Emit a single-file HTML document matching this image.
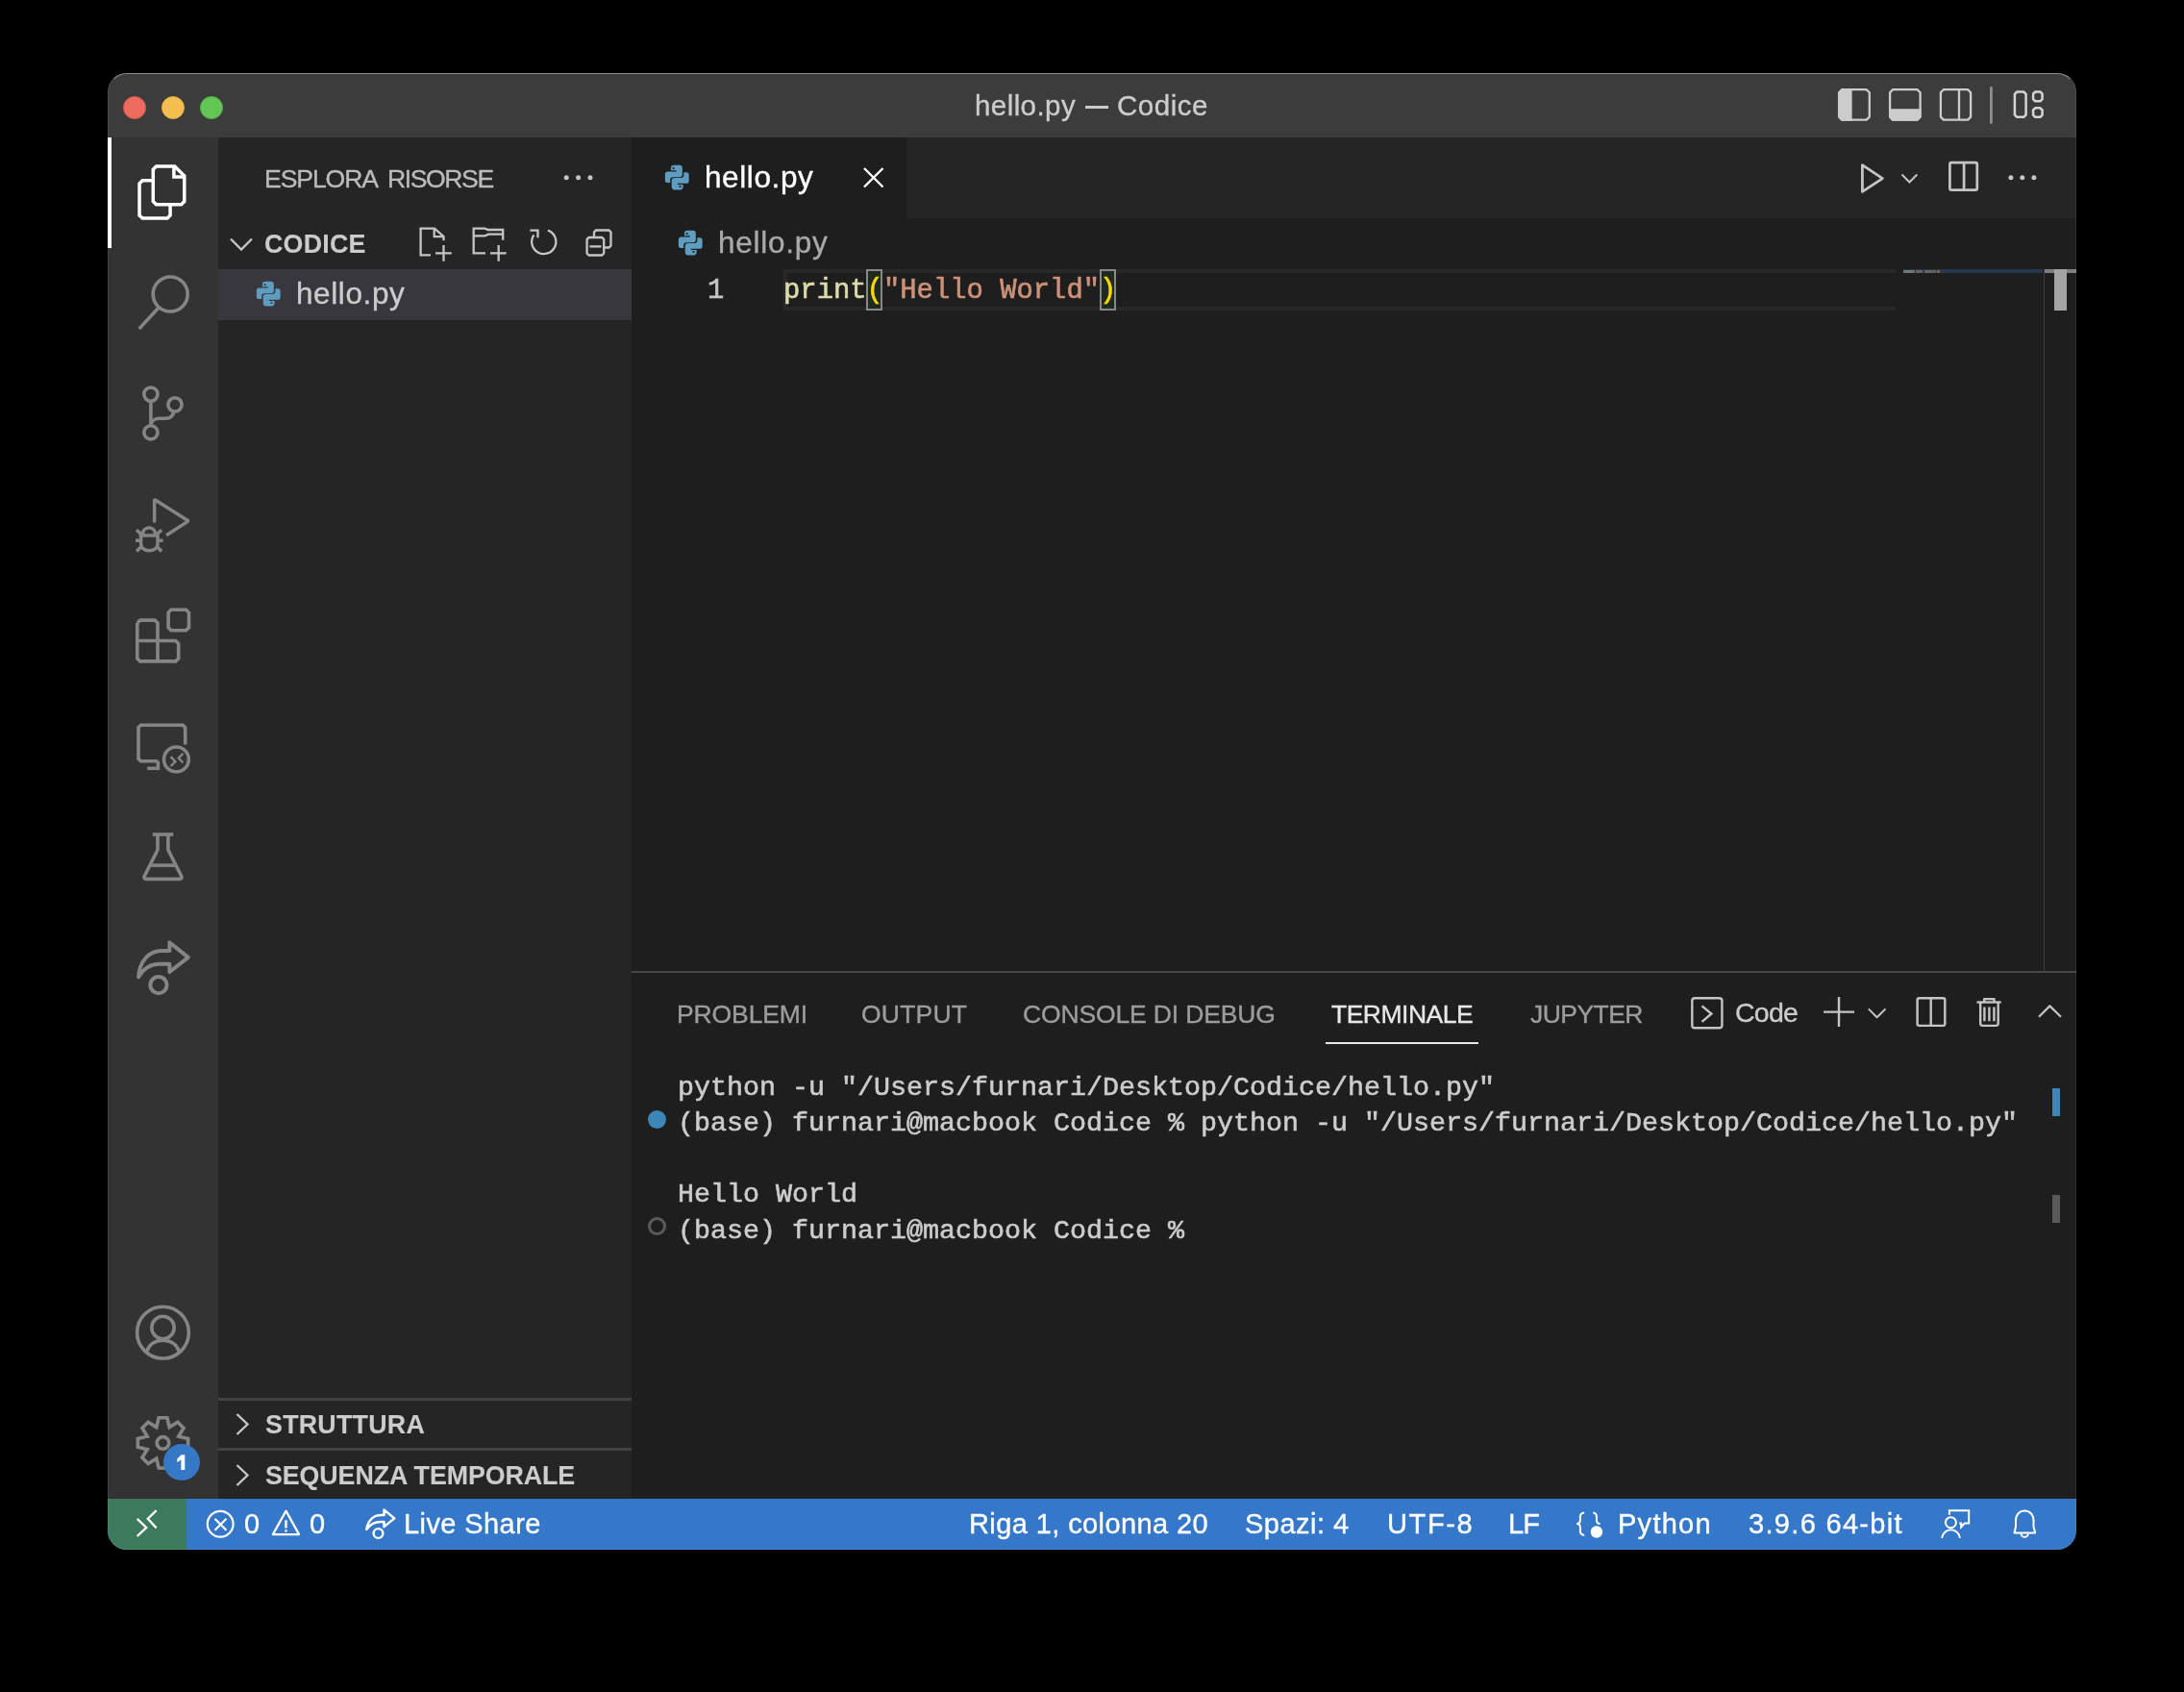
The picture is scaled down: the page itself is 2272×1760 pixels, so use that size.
<!DOCTYPE html>
<html><head><meta charset="utf-8">
<style>
html,body{margin:0;padding:0;background:#000;width:2272px;height:1760px;overflow:hidden;-webkit-font-smoothing:antialiased;}
*{box-sizing:border-box;}
.a{position:absolute;}
.t{position:absolute;white-space:nowrap;will-change:transform;-webkit-text-stroke:0.35px currentColor;font-family:"Liberation Sans",sans-serif;line-height:1;}
.b{-webkit-text-stroke:0.1px currentColor;}
.m{position:absolute;white-space:pre;will-change:transform;font-family:"Liberation Mono",monospace;line-height:1;}
#win{position:absolute;left:112px;top:76px;width:2048px;height:1536px;border-radius:20px;overflow:hidden;background:#1e1e1e;}
#pg{position:absolute;left:-112px;top:-76px;width:2272px;height:1760px;}
.ed{font-size:28.87px;-webkit-text-stroke:0.6px currentColor;}
.tm{font-size:28.33px;color:#cccccc;-webkit-text-stroke:0.6px currentColor;}
</style></head>
<body>
<div id="win"><div id="pg">
  <!-- title bar -->
  <div class="a" style="left:112px;top:76px;width:2048px;height:67px;background:#3c3c3c;"></div>
  <div class="a" style="left:1129px;top:110px;width:24px;height:3px;background:#cccccc;"></div>
  <!-- activity bar -->
  <div class="a" style="left:112px;top:143px;width:115px;height:1416px;background:#333333;"></div>
  <div class="a" style="left:112px;top:143px;width:4px;height:115px;background:#ffffff;"></div>
  <!-- sidebar -->
  <div class="a" style="left:227px;top:143px;width:430px;height:1416px;background:#252526;"></div>
  <div class="a" style="left:227px;top:280px;width:430px;height:53px;background:#37373d;"></div>
  <div class="a" style="left:227px;top:1454px;width:430px;height:3px;background:#424242;"></div>
  <div class="a" style="left:227px;top:1506px;width:430px;height:3px;background:#424242;"></div>
  <!-- tabs bar -->
  <div class="a" style="left:657px;top:143px;width:1503px;height:84px;background:#252526;"></div>
  <div class="a" style="left:657px;top:143px;width:286px;height:84px;background:#1e1e1e;"></div>
  <!-- editor -->
  <div class="a" style="left:657px;top:227px;width:1503px;height:783px;background:#1e1e1e;"></div>
  <!-- current line highlight -->
  <div class="a" style="left:815px;top:280px;width:1157px;height:43px;border:4px solid #282828;border-right:none;"></div>
  <!-- minimap line -->
  <div class="a" style="left:1980px;top:280px;width:145px;height:4px;background:#26384e;"></div>
  <div class="a" style="left:1980px;top:281px;width:10px;height:3px;background:#7f8a80;opacity:.8"></div>
  <div class="a" style="left:1990px;top:281px;width:2px;height:3px;background:#8a7a3a;opacity:.8"></div>
  <div class="a" style="left:1993px;top:281px;width:7px;height:3px;background:#7a6a66;opacity:.8"></div>
  <div class="a" style="left:2002px;top:281px;width:12px;height:3px;background:#7a6a66;opacity:.8"></div>
  <div class="a" style="left:2015px;top:281px;width:3px;height:3px;background:#8a7a3a;opacity:.8"></div>
  <!-- vertical scrollbar border + slider -->
  <div class="a" style="left:2126px;top:280px;width:1px;height:730px;background:#3c3c3c;"></div>
  <div class="a" style="left:2127px;top:280px;width:33px;height:4px;background:#7f7f7f;"></div>
  <div class="a" style="left:2137px;top:280px;width:13px;height:43px;background:#a4a4a4;"></div>
  <!-- bracket match boxes -->
  <div class="a" style="left:901px;top:280px;width:17px;height:43px;border:2px solid #888888;background:#1f2a1f;"></div>
  <div class="a" style="left:1144px;top:280px;width:17px;height:43px;border:2px solid #888888;background:#1f2a1f;"></div>
  <!-- code -->
  <div class="m ed" style="left:736px;top:289.08px;color:#c6c6c6;">1</div>
  <div class="m ed" style="left:815px;top:289.08px;"><span style="color:#dcdcaa">print</span><span style="color:#ffd700">(</span><span style="color:#ce9178">"Hello World"</span><span style="color:#ffd700">)</span></div>
  <!-- panel -->
  <div class="a" style="left:657px;top:1010px;width:1503px;height:549px;background:#1e1e1e;border-top:2px solid #474747;"></div>
  <div class="a" style="left:1379px;top:1083.5px;width:159px;height:2.5px;background:#e7e7e7;"></div>
  <!-- terminal -->
  <div class="m tm" style="left:705px;top:1117.8px;">python -u "/Users/furnari/Desktop/Codice/hello.py"</div>
  <div class="m tm" style="left:705px;top:1155.0px;">(base) furnari@macbook Codice % python -u "/Users/furnari/Desktop/Codice/hello.py"</div>
  <div class="m tm" style="left:705px;top:1229.4px;">Hello World</div>
  <div class="m tm" style="left:705px;top:1266.6px;">(base) furnari@macbook Codice % </div>
  <div class="a" style="left:674px;top:1155px;width:19px;height:19px;border-radius:50%;background:#3d87b8;"></div>
  <div class="a" style="left:674px;top:1266px;width:19px;height:19px;border-radius:50%;border:3px solid #5a5a5a;"></div>
  <div class="a" style="left:2135px;top:1132px;width:8px;height:29px;background:#3d87b8;"></div>
  <div class="a" style="left:2135px;top:1243px;width:8px;height:29px;background:#5a5a5a;"></div>
  <!-- status bar -->
  <div class="a" style="left:112px;top:1559px;width:2048px;height:53px;background:#3577c9;"></div>
  <div class="a" style="left:112px;top:1559px;width:82px;height:53px;background:#3b7b5b;"></div>
<div class="t" style="left:1013.90px;top:94.82px;font-size:29.5px;font-weight:400;color:#cccccc;letter-spacing:0.424px">hello.py</div>
<div class="t" style="left:1161.60px;top:94.82px;font-size:29.5px;font-weight:400;color:#cccccc;letter-spacing:0.516px">Codice</div>
<div class="t" style="left:274.90px;top:173.18px;font-size:26.6px;font-weight:400;color:#bbbbbb;letter-spacing:-1.099px">ESPLORA</div>
<div class="t" style="left:402.80px;top:173.18px;font-size:26.6px;font-weight:400;color:#bbbbbb;letter-spacing:-1.427px">RISORSE</div>
<div class="t b" style="left:275.00px;top:240.61px;font-size:26.8px;font-weight:700;color:#cccccc;letter-spacing:0.251px">CODICE</div>
<div class="t" style="left:308.00px;top:290.33px;font-size:31.5px;font-weight:400;color:#cccccc;letter-spacing:0.597px">hello.py</div>
<div class="t" style="left:733.00px;top:169.33px;font-size:31.5px;font-weight:400;color:#ffffff;letter-spacing:0.597px">hello.py</div>
<div class="t" style="left:747.00px;top:236.93px;font-size:31.5px;font-weight:400;color:#a9a9a9;letter-spacing:0.740px">hello.py</div>
<div class="t b" style="left:276.40px;top:1468.61px;font-size:26.8px;font-weight:700;color:#cccccc;letter-spacing:0.252px">STRUTTURA</div>
<div class="t b" style="left:276.40px;top:1521.61px;font-size:26.8px;font-weight:700;color:#cccccc;letter-spacing:-0.082px">SEQUENZA TEMPORALE</div>
<div class="t" style="left:703.80px;top:1041.86px;font-size:26.5px;font-weight:400;color:#9d9d9d;letter-spacing:-0.113px">PROBLEMI</div>
<div class="t" style="left:896.00px;top:1041.86px;font-size:26.5px;font-weight:400;color:#9d9d9d;letter-spacing:0.210px">OUTPUT</div>
<div class="t" style="left:1063.80px;top:1041.86px;font-size:26.5px;font-weight:400;color:#9d9d9d;letter-spacing:-0.149px">CONSOLE DI DEBUG</div>
<div class="t" style="left:1385.00px;top:1041.86px;font-size:26.5px;font-weight:400;color:#e7e7e7;letter-spacing:-0.499px">TERMINALE</div>
<div class="t" style="left:1591.60px;top:1041.86px;font-size:26.5px;font-weight:400;color:#9d9d9d;letter-spacing:-0.550px">JUPYTER</div>
<div class="t" style="left:1805.00px;top:1038.87px;font-size:28.5px;font-weight:400;color:#cccccc;letter-spacing:-0.761px">Code</div>
<div class="t" style="left:254.00px;top:1570.95px;font-size:29px;font-weight:400;color:#ffffff;letter-spacing:0.000px">0</div>
<div class="t" style="left:322.00px;top:1570.95px;font-size:29px;font-weight:400;color:#ffffff;letter-spacing:0.000px">0</div>
<div class="t" style="left:419.80px;top:1570.95px;font-size:29px;font-weight:400;color:#ffffff;letter-spacing:0.410px">Live Share</div>
<div class="t" style="left:1008.00px;top:1570.95px;font-size:29px;font-weight:400;color:#ffffff;letter-spacing:0.399px">Riga 1, colonna 20</div>
<div class="t" style="left:1295.00px;top:1570.95px;font-size:29px;font-weight:400;color:#ffffff;letter-spacing:0.478px">Spazi: 4</div>
<div class="t" style="left:1442.50px;top:1570.95px;font-size:29px;font-weight:400;color:#ffffff;letter-spacing:1.618px">UTF-8</div>
<div class="t" style="left:1568.50px;top:1570.95px;font-size:29px;font-weight:400;color:#ffffff;letter-spacing:-0.928px">LF</div>
<div class="t" style="left:1683.00px;top:1570.95px;font-size:29px;font-weight:400;color:#ffffff;letter-spacing:1.269px">Python</div>
<div class="t" style="left:1818.50px;top:1570.95px;font-size:29px;font-weight:400;color:#ffffff;letter-spacing:1.314px">3.9.6 64-bit</div>
<svg class="a" style="left:0;top:0" width="2272" height="1760" viewBox="0 0 2272 1760">

<!-- traffic lights -->
<circle cx="140" cy="112" r="11.6" fill="#ed6a5e" stroke="#d9574c" stroke-width="0.8"/>
<circle cx="180" cy="112" r="11.6" fill="#f5bf4f" stroke="#dfa73b" stroke-width="0.8"/>
<circle cx="220" cy="112" r="11.6" fill="#62c655" stroke="#4fad43" stroke-width="0.8"/>

<!-- title layout icons -->
<g fill="none" stroke="#cccccc" stroke-width="2.3" stroke-linejoin="round">
  <path d="M1916 93.2H1941.7L1944.8 96.3V121.6L1941.7 124.6H1916L1913.1 121.6V96.3Z"/>
  <path d="M1969 93.2H1994.6L1997.6 96.3V121.6L1994.6 124.6H1969L1966.1 121.6V96.3Z"/>
  <path d="M2021.8 93.2H2047.2L2050.1 96.3V121.6L2047.2 124.6H2021.8L2018.9 121.6V96.3Z"/>
  <path d="M2038 93.2V124.6"/>
</g>
<path d="M1913 96V121.6L1916 125.7H1926.6V92H1916L1913 96Z" fill="#cccccc"/>
<path d="M1965 113.2H1998.6V121.6L1995 125.7H1968.5L1965 121.6Z" fill="#cccccc"/>
<path d="M2071.4 91.5V127.5" stroke="#8e8e8e" stroke-width="2.8" stroke-linecap="round"/>
<g fill="none" stroke="#d4d4d4" stroke-width="2.5" stroke-linejoin="round">
  <path d="M2098.3 95.5H2105.2L2107.6 97.9V119.4L2105.2 121.8H2098.3L2095.9 119.4V97.9Z"/>
  <path d="M2117.3 95.5H2122.4L2124.6 97.7V103.1L2122.4 105.3H2117.3L2115.1 103.1V97.7Z"/>
  <path d="M2117.3 112.3H2122.4L2124.6 114.5V119.6L2122.4 121.8H2117.3L2115.1 119.6V114.5Z"/>
</g>

<!-- activity bar -->
<!-- files (active) -->
<g fill="none" stroke="#ffffff" stroke-width="3.5" stroke-linejoin="miter">
  <path d="M159.3 176.3L162.5 173.1H181.75L191.8 183V209.6L188.6 212.8H162.5L159.3 209.6Z"/>
  <path d="M180.9 173.1V184H191.8"/>
  <path d="M159.3 187.75H148.2L145.05 190.9V224L148.2 227.1H174L177.1 224V212.8"/>
</g>
<!-- search -->
<g fill="none" stroke="#858585" stroke-width="3.6">
  <circle cx="177.2" cy="306" r="18"/>
  <path d="M165 320L144.7 342.1"/>
</g>
<!-- source control -->
<g fill="none" stroke="#858585" stroke-width="3.6">
  <circle cx="156.9" cy="410.1" r="7.1"/>
  <circle cx="156.9" cy="449.8" r="7.1"/>
  <circle cx="182" cy="420.9" r="7.1"/>
  <path d="M156.9 417.2V442.7"/>
  <path d="M181 428C180 433.5 176.5 435.3 172 435.3H166C161 435.3 157.5 438 156.9 442"/>
</g>
<!-- run & debug -->
<g fill="none" stroke="#858585" stroke-width="3.5">
  <path d="M160.65 543.5V519.5L196.2 541.9L173.1 556.75" stroke-linejoin="bevel"/>
  <path d="M148.6 557.5V554.7A6.5 6.5 0 0 1 161.5 554.7V557.5"/>
  <path d="M144.7 557H165.4"/>
  <path d="M146.6 557V565.5C146.6 570 150.5 572.7 155.2 572.7C160 572.7 164 570 164 565.5V557"/>
  <path d="M142 551.2L146.8 555.6M168.1 551.2L163.4 555.6M141 562.3H145M165.4 562.3H169.5M142 573.5L147.2 568.6M168.1 573.5L163.1 568.6"/>
</g>
<!-- extensions -->
<g fill="none" stroke="#858585" stroke-width="3.6" stroke-linejoin="miter">
  <path d="M142.8 648V685L145.8 687.9H182.7L185.7 685V669.5L182.7 666.5H142.8"/>
  <path d="M142.8 648L145.8 645.1H161L164 648V687.9"/>
  <path d="M178 634.2H193.5L196.5 637.2V652.7L193.5 655.7H178L175.1 652.7V637.2Z"/>
</g>
<!-- remote explorer -->
<g fill="none" stroke="#858585" stroke-width="3.6" stroke-linejoin="miter">
  <path d="M164.4 791.75H146.5L144 789.3V756.8L146.5 754.3H190.2L192.7 756.8V774.5"/>
  <path d="M164.4 791.75V799.2H153.2"/>
  <circle cx="183.4" cy="789.9" r="12.9"/>
</g>
<g fill="none" stroke="#858585" stroke-width="2.4">
  <path d="M177.6 787.2L182.4 792.2L177.6 797"/>
  <path d="M190.4 783.8L185.8 788.5L190.4 793.3"/>
</g>
<!-- testing -->
<g fill="none" stroke="#858585" stroke-width="3.6" stroke-linejoin="round">
  <path d="M158.8 868H180.3"/>
  <path d="M164 868V884L150.2 911.5Q149 914.4 152.5 914.4H186.5Q190 914.4 188.8 911.5L174.9 884V868"/>
  <path d="M157.1 900.1H183"/>
</g>
<!-- live share -->
<g fill="none" stroke="#858585" stroke-width="4.0" stroke-linejoin="round">
  <path d="M176.4 989V980.3L195.8 995.9L176.4 1011V1002.7H165.6C156 1002.7 149 1008 144.1 1016.3C145 1000 155 989 168.1 989Z"/>
  <circle cx="165" cy="1024.6" r="8.6"/>
</g>
<!-- account -->
<g fill="none" stroke="#858585" stroke-width="3.6">
  <circle cx="169.5" cy="1386.1" r="26.9"/>
  <circle cx="169.5" cy="1381" r="11.7"/>
  <path d="M152.3 1406.5C155 1398.5 161 1394.2 169.5 1394.2C178 1394.2 184 1398.5 186.7 1406.5"/>
</g>
<!-- gear -->
<path id="gear" fill="none" stroke="#858585" stroke-width="3.6" stroke-linejoin="miter" d="M162.76 1484.64 L165.13 1474.76 L173.87 1474.76 L176.24 1484.64 L184.89 1479.33 L191.07 1485.51 L185.76 1494.16 L195.64 1496.53 L195.64 1505.27 L185.76 1507.64 L191.07 1516.29 L184.89 1522.47 L176.24 1517.16 L173.87 1527.04 L165.13 1527.04 L162.76 1517.16 L154.11 1522.47 L147.93 1516.29 L153.24 1507.64 L143.36 1505.27 L143.36 1496.53 L153.24 1494.16 L147.93 1485.51 L154.11 1479.33Z"/>
<circle cx="169.5" cy="1500.9" r="6.3" fill="none" stroke="#858585" stroke-width="3.6"/>
<!-- badge -->
<circle cx="189" cy="1521" r="19" fill="#3478c6"/>
<path d="M188.6 1513.2H192.3V1529.1H188.4V1518.3L184.3 1521.3V1517.6Z" fill="#ffffff"/>

<!-- sidebar -->
<g fill="#c5c5c5">
  <circle cx="589.2" cy="184.7" r="2.5"/>
  <circle cx="601.6" cy="184.7" r="2.5"/>
  <circle cx="614" cy="184.7" r="2.5"/>
</g>
<g fill="none" stroke="#c5c5c5" stroke-width="2.4">
  <path d="M240 248.5L251 259.5L262 248.5"/>
  <path d="M246.5 1471L257.5 1481.5L246.5 1492"/>
  <path d="M246.5 1524L257.5 1534.5L246.5 1545"/>
</g>
<g fill="none" stroke="#c5c5c5" stroke-width="2.3" stroke-linejoin="miter">
  <!-- new file -->
  <path d="M448 265.3H437.6V237.6H452L461.5 245.9V250.2"/>
  <path d="M451.7 237.6V246.2H461.5"/>
  <path d="M453 263.3H469.8M461.5 255V271.8"/>
  <!-- new folder -->
  <path d="M505 263.3H492.7V237.6H504.5L507.5 239.0H523.2V249.7"/>
  <path d="M492.7 245.3H504.5L508 243.7H523.2"/>
  <path d="M510 263.3H526.7M518.7 255V271.8"/>
  <!-- refresh -->
  <path d="M570 239.6A12.6 12.6 0 1 1 555.4 244.3"/>
  <path d="M551.4 239.6H559.5V247.2"/>
  <!-- collapse -->
  <path d="M612.6 247H626.2L628.2 249V263.5L626.2 265.5H612.6L610.6 263.5V249Z"/>
  <path d="M618 247V241.5L620 239.5H633.5L635.5 241.5V255.5L633.5 257.5H628.2"/>
  <path d="M613.4 256.4H625.5"/>
</g>
<!-- python icons -->
<g fill="#5f9dc0">
  <g transform="translate(685 165) scale(0.02364)">
    <path d="M680 290H920Q1050 290 1050 420V690Q1050 815 925 815H640Q515 815 515 940V1060H410Q290 1060 290 940V690Q290 570 410 570H790V520H545V420Q545 290 680 290Z"/>
    <path transform="rotate(180 815 830)" d="M680 290H920Q1050 290 1050 420V690Q1050 815 925 815H640Q515 815 515 940V1060H410Q290 1060 290 940V690Q290 570 410 570H790V520H545V420Q545 290 680 290Z"/>
  </g>
  <g transform="translate(260 286) scale(0.02364)">
    <path d="M680 290H920Q1050 290 1050 420V690Q1050 815 925 815H640Q515 815 515 940V1060H410Q290 1060 290 940V690Q290 570 410 570H790V520H545V420Q545 290 680 290Z"/>
    <path transform="rotate(180 815 830)" d="M680 290H920Q1050 290 1050 420V690Q1050 815 925 815H640Q515 815 515 940V1060H410Q290 1060 290 940V690Q290 570 410 570H790V520H545V420Q545 290 680 290Z"/>
  </g>
  <g transform="translate(699 233) scale(0.02364)">
    <path d="M680 290H920Q1050 290 1050 420V690Q1050 815 925 815H640Q515 815 515 940V1060H410Q290 1060 290 940V690Q290 570 410 570H790V520H545V420Q545 290 680 290Z"/>
    <path transform="rotate(180 815 830)" d="M680 290H920Q1050 290 1050 420V690Q1050 815 925 815H640Q515 815 515 940V1060H410Q290 1060 290 940V690Q290 570 410 570H790V520H545V420Q545 290 680 290Z"/>
  </g>
</g>
<g fill="#1e1e1e">
  <circle cx="700.6" cy="175" r="1.1"/><circle cx="707.5" cy="194" r="1.1"/>
  <circle cx="714.6" cy="243" r="1.1"/><circle cx="721.5" cy="262" r="1.1"/>
</g>
<g fill="#37373d">
  <circle cx="275.6" cy="296" r="1.1"/><circle cx="282.5" cy="315" r="1.1"/>
</g>
<!-- tab close -->
<path d="M899 175L918.5 194.5M918.5 175L899 194.5" stroke="#ffffff" stroke-width="2.4" fill="none"/>
<!-- editor actions -->
<g fill="none" stroke="#c5c5c5" stroke-width="2.8" stroke-linejoin="round">
  <path d="M1937.4 171.7V199.4L1958.4 185.6Z"/>
  <path d="M2030 169.2H2055.2Q2056.8 169.2 2056.8 170.8V196Q2056.8 197.6 2055.2 197.6H2030Q2028.4 197.6 2028.4 196V170.8Q2028.4 169.2 2030 169.2Z" stroke-width="2.7"/>
  <path d="M2043.1 169.2V197.6" stroke-width="2.7"/>
</g>
<path d="M1978.5 181.5L1986.4 189.5L1994.3 181.5" fill="none" stroke="#c5c5c5" stroke-width="2"/>
<g fill="#c5c5c5">
  <circle cx="2091.9" cy="184.7" r="2.5"/>
  <circle cx="2103.8" cy="184.7" r="2.5"/>
  <circle cx="2115.9" cy="184.7" r="2.5"/>
</g>

<!-- panel actions -->
<g fill="none" stroke="#c5c5c5" stroke-width="2.4" stroke-linejoin="round">
  <path d="M1763 1038.2H1788.6Q1791.4 1038.2 1791.4 1041V1066.4Q1791.4 1069.2 1788.6 1069.2H1763Q1760.3 1069.2 1760.3 1066.4V1041Q1760.3 1038.2 1763 1038.2Z"/>
  <path d="M1770.5 1046.4L1780.4 1054.5L1770.5 1062.8" stroke-linejoin="miter"/>
  <path d="M1897.1 1052.6H1929M1913 1037V1068.1"/>
  <path d="M1943.8 1049.4L1952.6 1058.2L1961.5 1049.4" stroke-width="2"/>
  <path d="M1996.5 1038.2H2021.5Q2023.3 1038.2 2023.3 1040V1065.1Q2023.3 1066.9 2021.5 1066.9H1996.5Q1994.6 1066.9 1994.6 1065.1V1040Q1994.6 1038.2 1996.5 1038.2Z"/>
  <path d="M2008.7 1038.2V1066.9"/>
  <path d="M2056.5 1042.5H2081.7"/>
  <path d="M2064.2 1042.5V1039.1H2074.5V1042.5"/>
  <path d="M2060.2 1042.5V1064.5Q2060.2 1066.9 2062.6 1066.9H2076.3Q2078.7 1066.9 2078.7 1064.5V1042.5"/>
  <path d="M2064.4 1047.5V1062.3M2069.4 1047.5V1062.3M2074.4 1047.5V1062.3" stroke-linejoin="miter"/>
  <path d="M2121 1057.8L2132.4 1046.4L2144 1057.8" stroke-width="2.2"/>
</g>

<!-- status bar icons -->
<g fill="none" stroke="#ffffff" stroke-width="2.3">
  <path d="M142.7 1579.8L152.3 1588.9L142.7 1598"/>
  <path d="M162.7 1571.1L153.75 1579.8L162.7 1589.4"/>
  <circle cx="229.2" cy="1585.2" r="13.4" stroke-width="2.2"/>
  <path d="M223.5 1579.8L235.5 1591.8M235.5 1579.8L223.5 1591.8" stroke-width="2.2"/>
  <path d="M297.5 1571.6L283.9 1596.1H311.1Z" stroke-width="2.2" stroke-linejoin="round"/>
  <path d="M297.5 1581.2V1589.4" stroke-width="2.4"/>
  <path d="M297.5 1591.3V1593.5" stroke-width="2.4"/>
  <!-- live share -->
  <path d="M399.5 1575.9V1570.5L410.3 1579.4L399.5 1588.1V1583H395.5C389 1583 385 1586 381.3 1590.7C383 1581 389 1575.9 396.4 1575.9Z" stroke-width="2.5" stroke-linejoin="round"/>
  <circle cx="393.5" cy="1595" r="4.9" stroke-width="2.4"/>
  <!-- language braces -->
  <path d="M1648.2 1573.4C1645.5 1573.6 1643.9 1575 1643.9 1577.5V1581.3C1643.9 1583.6 1642.5 1585 1640.2 1585C1642.5 1585 1643.9 1586.4 1643.9 1588.7V1592.6C1643.9 1595.2 1645.5 1596.7 1648.2 1596.9" stroke-width="2"/>
  <path d="M1657.2 1573.4C1659.5 1573.6 1660.9 1575 1660.9 1577.5V1581.3C1660.9 1583.6 1662.3 1585 1664.6 1585.1" stroke-width="2"/>
  <!-- feedback -->
  <circle cx="2029.4" cy="1583.7" r="5.5" stroke-width="2"/>
  <path d="M2020.2 1599.8A9.4 9.4 0 0 1 2038.9 1599.8" stroke-width="2"/>
  <path d="M2027.9 1575.7V1571.2H2048.2V1584.6H2043.7L2040.1 1588.5V1584.6H2038.3" stroke-width="2" stroke-linejoin="miter"/>
  <!-- bell -->
  <path d="M2095.5 1594.4L2097 1588V1581.5C2097 1575.5 2101 1571.6 2106.2 1571.6C2111.4 1571.6 2115.5 1575.5 2115.5 1581.5V1588L2117.2 1594.4Z" stroke-width="2" stroke-linejoin="round"/>
  <path d="M2102.6 1595.2A3.6 3.6 0 0 0 2109.8 1595.2" stroke-width="2"/>
</g>
<circle cx="1660.9" cy="1593.5" r="6.2" fill="#ffffff"/>
</svg>

</div></div>
<div id="wb" style="position:absolute;left:112px;top:76px;width:2048px;height:1536px;border-radius:20px;border:1px solid rgba(255,255,255,0.07);border-top:1.5px solid rgba(255,255,255,0.42);pointer-events:none;"></div>
</body></html>
